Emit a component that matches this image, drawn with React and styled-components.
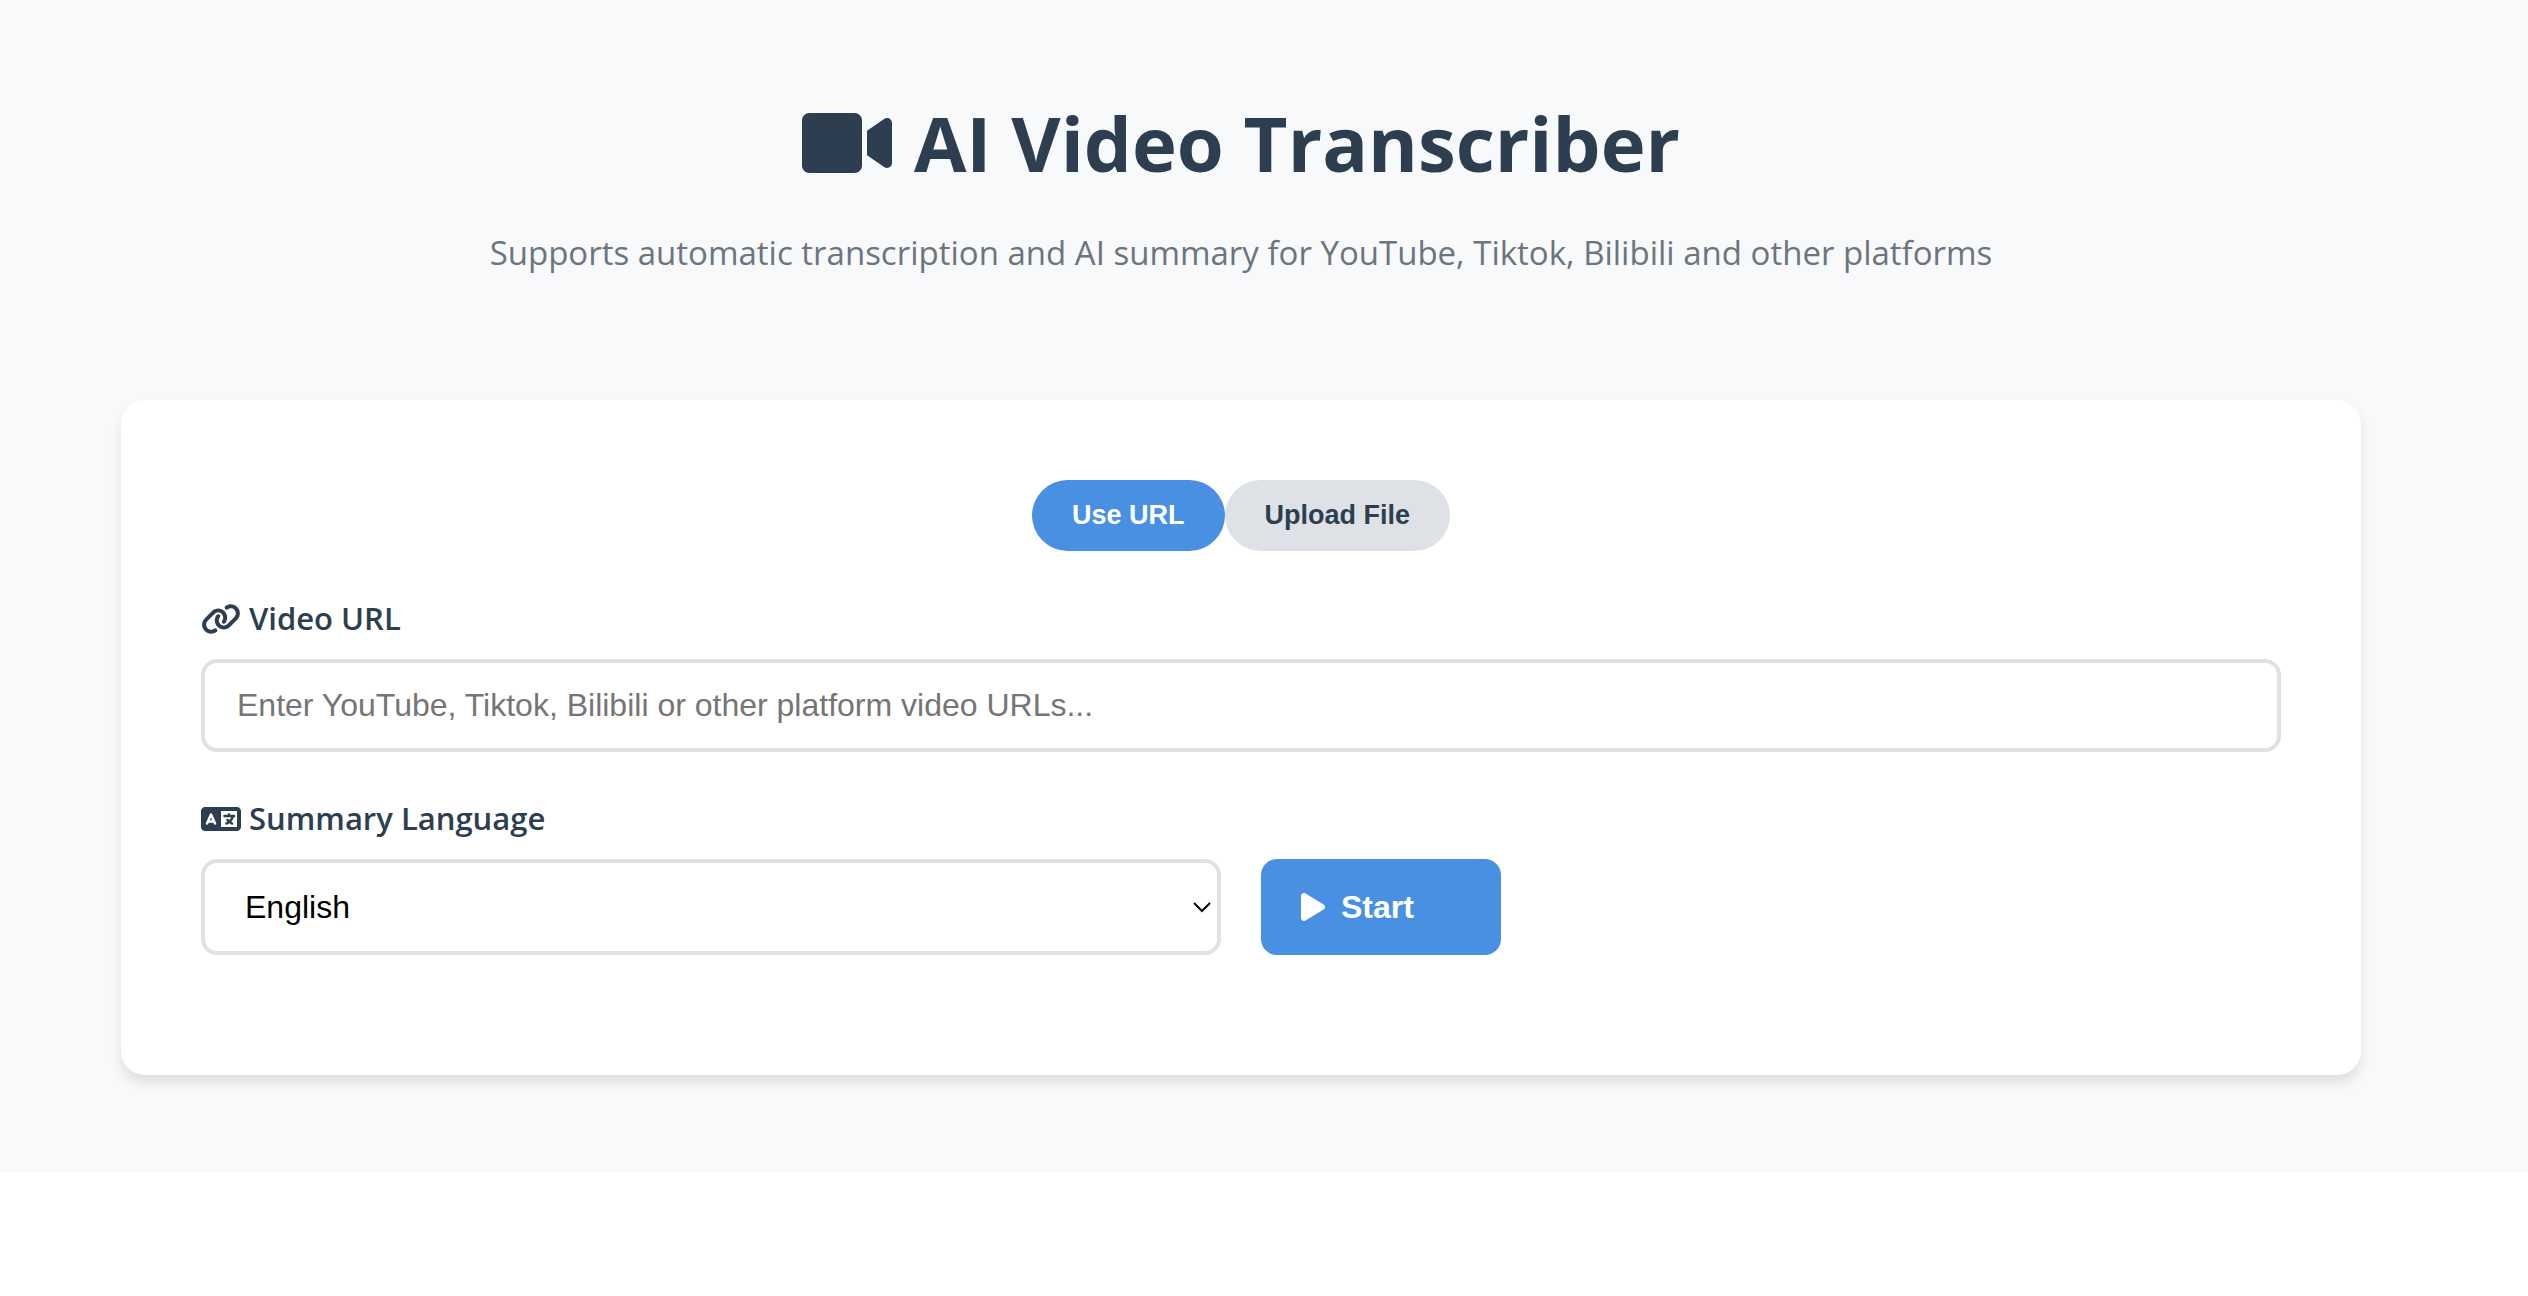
import React, { useState } from "react";
import styled, { createGlobalStyle } from "styled-components";
import { FaVideo } from "react-icons/fa";
import { FaLink, FaLanguage, FaPlay } from "react-icons/fa6";

const GlobalStyle = createGlobalStyle`
  *, *::before, *::after { box-sizing: border-box; }
  body {
    margin: 0;
    background: #ffffff;
    color: #2c3e50;
    font-family: "Open Sans", "Noto Sans", sans-serif;
    line-height: 53px;
  }
`;

const Page = styled.div`
  padding: 80px 126px 97px 80px;
  background: #f8f9fb;
`;

const Container = styled.main`
  max-width: 2240px;
  margin: 0 auto;
`;

const Header = styled.header`
  display: flex;
  flex-direction: column;
  align-items: center;
  gap: 18px;
  margin-bottom: 118px;
  text-align: center;
`;

const Title = styled.h1`
  display: flex;
  align-items: center;
  gap: 22px;
  margin: 0;
  font-size: 76px;
  font-weight: 700;
  line-height: 126px;

  svg { width: 90px; height: 80px; }
`;

const Subtitle = styled.p`
  margin: 0;
  color: #6c757d;
  font-size: 33px;
  line-height: 58px;
`;

const Card = styled.form`
  padding: 80px 80px 120px;
  border-radius: 24px;
  background: #ffffff;
  box-shadow: 0 8px 12px rgba(0, 0, 0, 0.1);
`;

const Toggle = styled.div`
  display: flex;
  justify-content: center;
  margin-bottom: 41px;
`;

const ToggleButton = styled.button`
  height: 71px;
  padding: 0 40px;
  border: 0;
  border-radius: 50px;
  background: ${({ $active }) => ($active ? "#4a90e2" : "#dee2e6")};
  color: ${({ $active }) => ($active ? "#ffffff" : "#2c3e50")};
  font: 700 27px "Liberation Sans", sans-serif;
  cursor: pointer;
`;

const Field = styled.div`
  display: flex;
  flex-direction: column;
  gap: 14px;
`;

const Label = styled.label`
  display: flex;
  align-items: center;
  gap: 8px;
  font-size: 31px;
  font-weight: 600;

  svg { width: 40px; height: 32px; }
`;

const control = `
  width: 100%;
  border: 4px solid #dee2e6;
  border-radius: 16px;
  background: #ffffff;
  font: 32px "Liberation Sans", sans-serif;
`;

const Input = styled.input`
  ${control}
  height: 93px;
  padding: 0 32px;

  &::placeholder { color: #757575; }
`;

const SelectBox = styled.div`
  position: relative;
  display: flex;
`;

const Select = styled.select`
  ${control}
  height: 96px;
  padding: 0 40px;
  color: #000000;
  appearance: none;
`;

const Chevron = styled.svg`
  position: absolute;
  top: 50%;
  right: 10px;
  width: 18px;
  height: 12px;
  margin-top: -6px;
  fill: none;
  stroke: #000000;
  stroke-width: 2;
  pointer-events: none;
`;

const Row = styled.div`
  display: grid;
  grid-template-columns: 1fr 1fr;
  align-items: end;
  gap: 40px;
  margin-top: 40px;
`;

const StartButton = styled.button`
  display: flex;
  align-items: center;
  justify-self: start;
  gap: 16px;
  min-width: 240px;
  height: 96px;
  padding: 0 40px;
  border: 0;
  border-radius: 16px;
  background: #4a90e2;
  color: #ffffff;
  font: 700 32px "Liberation Sans", sans-serif;
  cursor: pointer;

  svg { width: 24px; height: 32px; }
`;

export default function App() {
  const [mode, setMode] = useState("url");

  return (
    <>
      <GlobalStyle />
      <Page>
        <Container>
          <Header>
            <Title>
              <FaVideo aria-hidden="true" />
              AI Video Transcriber
            </Title>
            <Subtitle>
              Supports automatic transcription and AI summary for YouTube, Tiktok, Bilibili and other platforms
            </Subtitle>
          </Header>
          <Card onSubmit={(event) => event.preventDefault()}>
            <Toggle>
              <ToggleButton type="button" $active={mode === "url"} onClick={() => setMode("url")}>
                Use URL
              </ToggleButton>
              <ToggleButton type="button" $active={mode === "file"} onClick={() => setMode("file")}>
                Upload File
              </ToggleButton>
            </Toggle>
            <Field>
              <Label htmlFor="video-url">
                <FaLink aria-hidden="true" />
                Video URL
              </Label>
              <Input
                id="video-url"
                type="url"
                placeholder="Enter YouTube, Tiktok, Bilibili or other platform video URLs..."
              />
            </Field>
            <Row>
              <Field>
                <Label htmlFor="summary-language">
                  <FaLanguage aria-hidden="true" />
                  Summary Language
                </Label>
                <SelectBox>
                  <Select id="summary-language" defaultValue="en">
                    <option value="en">English</option>
                  </Select>
                  <Chevron viewBox="0 0 18 12" aria-hidden="true">
                    <path d="M1 2l8 8 8-8" />
                  </Chevron>
                </SelectBox>
              </Field>
              <StartButton type="submit">
                <FaPlay aria-hidden="true" />
                Start
              </StartButton>
            </Row>
          </Card>
        </Container>
      </Page>
    </>
  );
}
